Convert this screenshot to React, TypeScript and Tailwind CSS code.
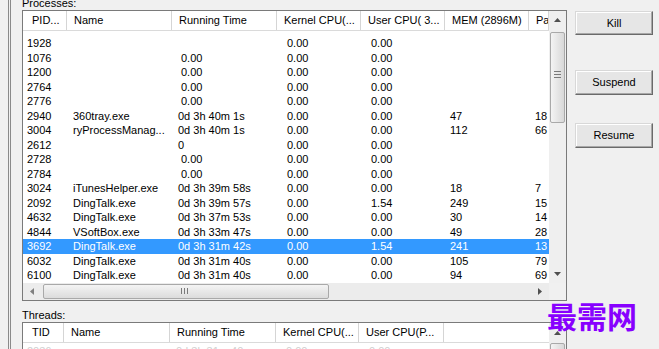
import React from "react";

type Row = string[];

const rows: Row[] = [
  ["1928", "", "", "0.00", "0.00", "", ""],
  ["1076", "", "0.00", "0.00", "0.00", "", ""],
  ["1200", "", "0.00", "0.00", "0.00", "", ""],
  ["2764", "", "0.00", "0.00", "0.00", "", ""],
  ["2776", "", "0.00", "0.00", "0.00", "", ""],
  ["2940", "360tray.exe", "0d 3h 40m 1s", "0.00", "0.00", "47", "18"],
  ["3004", "ryProcessManag...", "0d 3h 40m 1s", "0.00", "0.00", "112", "66"],
  ["2612", "", "0", "0.00", "0.00", "", ""],
  ["2728", "", "0.00", "0.00", "0.00", "", ""],
  ["2784", "", "0.00", "0.00", "0.00", "", ""],
  ["3024", "iTunesHelper.exe", "0d 3h 39m 58s", "0.00", "0.00", "18", "7"],
  ["2092", "DingTalk.exe", "0d 3h 39m 57s", "0.00", "1.54", "249", "15"],
  ["4632", "DingTalk.exe", "0d 3h 37m 53s", "0.00", "0.00", "30", "14"],
  ["4844", "VSoftBox.exe", "0d 3h 33m 47s", "0.00", "0.00", "49", "28"],
  ["3692", "DingTalk.exe", "0d 3h 31m 42s", "0.00", "1.54", "241", "13"],
  ["6032", "DingTalk.exe", "0d 3h 31m 40s", "0.00", "0.00", "105", "79"],
  ["6100", "DingTalk.exe", "0d 3h 31m 40s", "0.00", "0.00", "94", "69"],
];

const colW = ["w-[44px]", "w-[105px]", "w-[105px]", "w-[84px]", "w-[84px]", "w-[84px]", "w-[20px]"];
const colPad = ["pl-[4px]", "pl-[6px]", "pl-[6px]", "pl-[10px]", "pl-[10px]", "pl-[5px]", "pl-[6px]"];
const procHeaders = ["PID...", "Name", "Running Time", "Kernel CPU(...", "User CPU( 3...", "MEM (2896M)", "Pa"];

const UpArrow = () => (
  <svg width="7" height="4" viewBox="0 0 7 4">
    <polygon points="0,4 3.5,0 7,4" fill="#505050" />
  </svg>
);
const DownArrow = () => (
  <svg width="7" height="4" viewBox="0 0 7 4">
    <polygon points="0,0 3.5,4 7,0" fill="#505050" />
  </svg>
);
const LeftArrow = () => (
  <svg width="4" height="7" viewBox="0 0 4 7">
    <polygon points="4,0 0,3.5 4,7" fill="#808080" />
  </svg>
);
const RightArrow = () => (
  <svg width="4" height="7" viewBox="0 0 4 7">
    <polygon points="0,0 4,3.5 0,7" fill="#505050" />
  </svg>
);

function Button({ label, cls }: { label: string; cls: string }) {
  return (
    <div
      className={`${cls} w-[78px] flex items-center justify-center bg-[#e6e6e6] border border-t-[#d8d8d8] border-l-[#d8d8d8] border-r-[#6a6a6a] border-b-[#6a6a6a] shadow-[inset_-1px_-1px_0_#a8a8a8,inset_1px_1px_0_#ffffff] text-black text-[11px]`}
    >
      {label}
    </div>
  );
}

function ProcHeader() {
  return (
    <div className="h-[20px] flex bg-white border-b border-[#dadada] shrink-0">
      {procHeaders.map((h, i) => (
        <div
          key={i}
          className={`${colW[i]} shrink-0 h-full flex items-center overflow-hidden whitespace-nowrap border-r border-[#d5d5d5] ${i === 0 ? "pl-[9px]" : "pl-[7px]"}`}
        >
          {h}
        </div>
      ))}
    </div>
  );
}

function ProcRow({ r }: { r: Row }) {
  const sel = r[0] === "3692";
  return (
    <div className={`h-[14.5px] leading-[14.5px] flex ${sel ? "bg-[#3399ff] text-white" : "text-black"}`}>
      {r.map((v, i) => (
        <div
          key={i}
          className={`${colW[i]} shrink-0 overflow-hidden whitespace-nowrap ${i === 2 && v === "0.00" ? "pl-[9px]" : colPad[i]}`}
        >
          {v}
        </div>
      ))}
    </div>
  );
}

function ProcessesList() {
  return (
    <div className="ml-[11px] w-[545px] h-[294px] border border-[#7a7a7a] flex bg-white">
      <div className="w-[526px] h-full flex flex-col overflow-hidden">
        <ProcHeader />
        <div className="h-[5px] shrink-0" />
        <div className="shrink-0">
          {rows.map((r) => (
            <ProcRow key={r[0]} r={r} />
          ))}
        </div>
        <div className="flex-1" />
        <div className="h-[17px] shrink-0 bg-[#ececec] flex items-center">
          <div className="w-[17px] h-full flex items-center justify-center">
            <LeftArrow />
          </div>
          <div className="ml-[3px] w-[286px] h-[15px] rounded-[2px] border border-[#a9a9a9] bg-gradient-to-b from-[#f4f4f4] to-[#dcdcdc] flex items-center pl-[137px]">
            <div className="flex gap-[2px]">
              <div className="w-px h-[6px] bg-[#7a7a7a]" />
              <div className="w-px h-[6px] bg-[#7a7a7a]" />
              <div className="w-px h-[6px] bg-[#7a7a7a]" />
            </div>
          </div>
          <div className="flex-1" />
          <div className="w-[19px] h-full flex items-center justify-center">
            <RightArrow />
          </div>
        </div>
      </div>
      <div className="w-[17px] h-full flex flex-col bg-[#efefef]">
        <div className="h-[17px] flex items-center justify-center shrink-0">
          <UpArrow />
        </div>
        <div className="mt-[4px] mx-[1px] h-[91px] rounded-[2px] border border-[#a9a9a9] bg-gradient-to-r from-[#f4f4f4] to-[#d8d8d8] flex flex-col items-center pt-[38px] gap-[2px] shrink-0">
          <div className="w-[7px] h-px bg-[#7a7a7a]" />
          <div className="w-[7px] h-px bg-[#7a7a7a]" />
          <div className="w-[7px] h-px bg-[#7a7a7a]" />
        </div>
        <div className="flex-1" />
        <div className="h-[17px] flex items-center justify-center shrink-0">
          <DownArrow />
        </div>
        <div className="h-[17px] shrink-0 bg-[#f0f0f0]" />
      </div>
    </div>
  );
}

const thrW = ["w-[41px]", "w-[106px]", "w-[106px]", "w-[83px]", "w-[85px]"];
const thrHeaders = ["TID", "Name", "Running Time", "Kernel CPU(...", "User CPU(P..."];

function ThreadsList() {
  return (
    <div className="ml-[11px] w-[545px] h-[40px] border border-[#7a7a7a] border-b-0 flex bg-white">
      <div className="w-[526px] h-full flex flex-col overflow-hidden">
        <div className="h-[20px] flex bg-white border-b border-[#dadada] shrink-0">
          {thrHeaders.map((h, i) => (
            <div
              key={i}
              className={`${thrW[i]} shrink-0 h-full flex items-center overflow-hidden whitespace-nowrap border-r border-[#d5d5d5] ${i === 0 ? "pl-[9px]" : "pl-[7px]"}`}
            >
              {h}
            </div>
          ))}
          <div className="flex-1 h-full" />
        </div>
        <div className="h-[14.5px] leading-[14.5px] flex text-[#d0d0d0] mt-[1px]">
          <div className="w-[41px] pl-[4px] shrink-0">2036</div>
          <div className="w-[106px] shrink-0" />
          <div className="w-[106px] pl-[6px] shrink-0">0d 3h 31m 40s</div>
          <div className="w-[83px] pl-[10px] shrink-0">0.00</div>
          <div className="w-[85px] pl-[10px] shrink-0">0.00</div>
        </div>
      </div>
      <div className="w-[17px] h-full flex flex-col bg-[#efefef]">
        <div className="h-[20px] flex items-center justify-center shrink-0">
          <UpArrow />
        </div>
        <div className="mx-[1px] h-[40px] rounded-[2px] border border-[#a9a9a9] bg-gradient-to-r from-[#f4f4f4] to-[#d8d8d8] shrink-0" />
      </div>
    </div>
  );
}

export default function App() {
  return (
    <div className="relative w-[659px] h-[349px] bg-[#f0f0f0] overflow-hidden text-[11px] text-black font-['Liberation_Sans',Arial,sans-serif]">
      <div className="flex h-full">
        <div className="w-[8px] shrink-0" />
        <div className="w-[3px] shrink-0 h-full border-l-[3px] border-double border-[#8a8a8a]" />
        <div className="w-[556px] shrink-0 flex flex-col">
          <div className="h-[10px] overflow-hidden pl-[11px] shrink-0">
            <div className="-mt-[3px] leading-[13px]">Processes:</div>
          </div>
          <ProcessesList />
          <div className="mt-[8px] h-[13px] leading-[13px] pl-[11px] shrink-0">Threads:</div>
          <ThreadsList />
        </div>
        <div className="ml-[8px] flex flex-col pt-[11px]">
          <Button label="Kill" cls="h-[24px]" />
          <Button label="Suspend" cls="mt-[35px] h-[25px]" />
          <Button label="Resume" cls="mt-[28px] h-[25px]" />
        </div>
      </div>
      <div className="absolute left-[547px] top-[300px] text-[30px] leading-none font-bold text-[#8800ff] font-['Noto_Sans_CJK_SC',sans-serif] tracking-[0px]">
        最需网
      </div>
    </div>
  );
}
